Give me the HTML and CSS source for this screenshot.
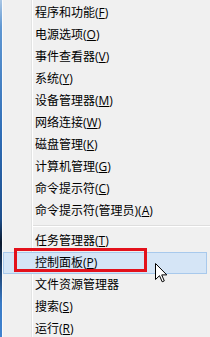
FILE: index.html
```html
<!DOCTYPE html>
<html lang="zh-CN">
<head>
<meta charset="utf-8">
<title>Win+X 菜单</title>
<link rel="stylesheet" href="styles.css">
</head>
<body>
<div class="screen">
  <div class="desk"></div>
  <div class="menu">
    <div class="item">程序和功能(<u>F</u>)</div>
    <div class="item">电源选项(<u>O</u>)</div>
    <div class="item">事件查看器(<u>V</u>)</div>
    <div class="item">系统(<u>Y</u>)</div>
    <div class="item">设备管理器(<u>M</u>)</div>
    <div class="item">网络连接(<u>W</u>)</div>
    <div class="item">磁盘管理(<u>K</u>)</div>
    <div class="item">计算机管理(<u>G</u>)</div>
    <div class="item">命令提示符(<u>C</u>)</div>
    <div class="item">命令提示符(管理员)(<u>A</u>)</div>
    <div class="sep"></div>
    <div class="item">任务管理器(<u>T</u>)</div>
    <div class="item hot">控制面板(<u>P</u>)</div>
    <div class="item">文件资源管理器</div>
    <div class="item">搜索(<u>S</u>)</div>
    <div class="item">运行(<u>R</u>)</div>
  </div>
  <div class="mark"></div>
  <svg class="cursor" width="13" height="20" viewBox="0 0 13 20">
    <path d="M0.5 0.5 V16.5 L4.5 12.7 L7.2 18.8 L9.3 17.9 L6.7 11.9 H11.8 Z" fill="#fff" stroke="#000" stroke-width="1" stroke-linejoin="miter"/>
  </svg>
</div>
</body>
</html>
```

FILE: styles.css
```css
html, body {
  margin: 0;
  padding: 0;
  width: 210px;
  height: 337px;
  overflow: hidden;
  background: #f0f0f0;
}

.screen {
  position: relative;
  display: flex;
  width: 210px;
  height: 337px;
  overflow: hidden;
  font-family: "Open Sans", "Noto Sans CJK SC", sans-serif;
  font-size: 12px;
  color: #000;
}

.desk {
  flex: 0 0 2px;
  background: linear-gradient(to bottom, #a9c6e4 0%, #5f97d2 8%, #2f6db6 40%, #1e4f8c 65%, #0b1a2e 72%, #16335a 78%, #3a7bc6 90%, #3f82cf 100%);
}

.menu {
  flex: 1;
  border-left: 1px solid #fbfbfb;
  padding-top: 2px;
  background:
    linear-gradient(to right, transparent 28px, #e2e3e3 28px, #e2e3e3 29px, #ffffff 29px, #ffffff 30px, transparent 30px),
    #f0f0f0;
}

.item {
  height: 22px;
  display: flex;
  align-items: center;
  padding-left: 32px;
  white-space: nowrap;
  line-height: 22px;
}

.item u {
  text-decoration-thickness: 1px;
  text-underline-offset: 1px;
}

.item.hot {
  margin-right: 3px;
  background: #d5e5f6;
  box-shadow: inset 0 0 0 1px #a8c9ec;
}

.sep {
  height: 8px;
  margin-left: 30px;
  background: linear-gradient(to bottom, transparent 3px, #dedede 3px, #dedede 4px, #ffffff 4px, #ffffff 5px, transparent 5px);
}

.mark {
  position: absolute;
  left: 14px;
  top: 248px;
  width: 133px;
  height: 24px;
  box-sizing: border-box;
  border: 3px solid #e3111b;
}

.cursor {
  position: absolute;
  left: 155px;
  top: 263px;
}
```
